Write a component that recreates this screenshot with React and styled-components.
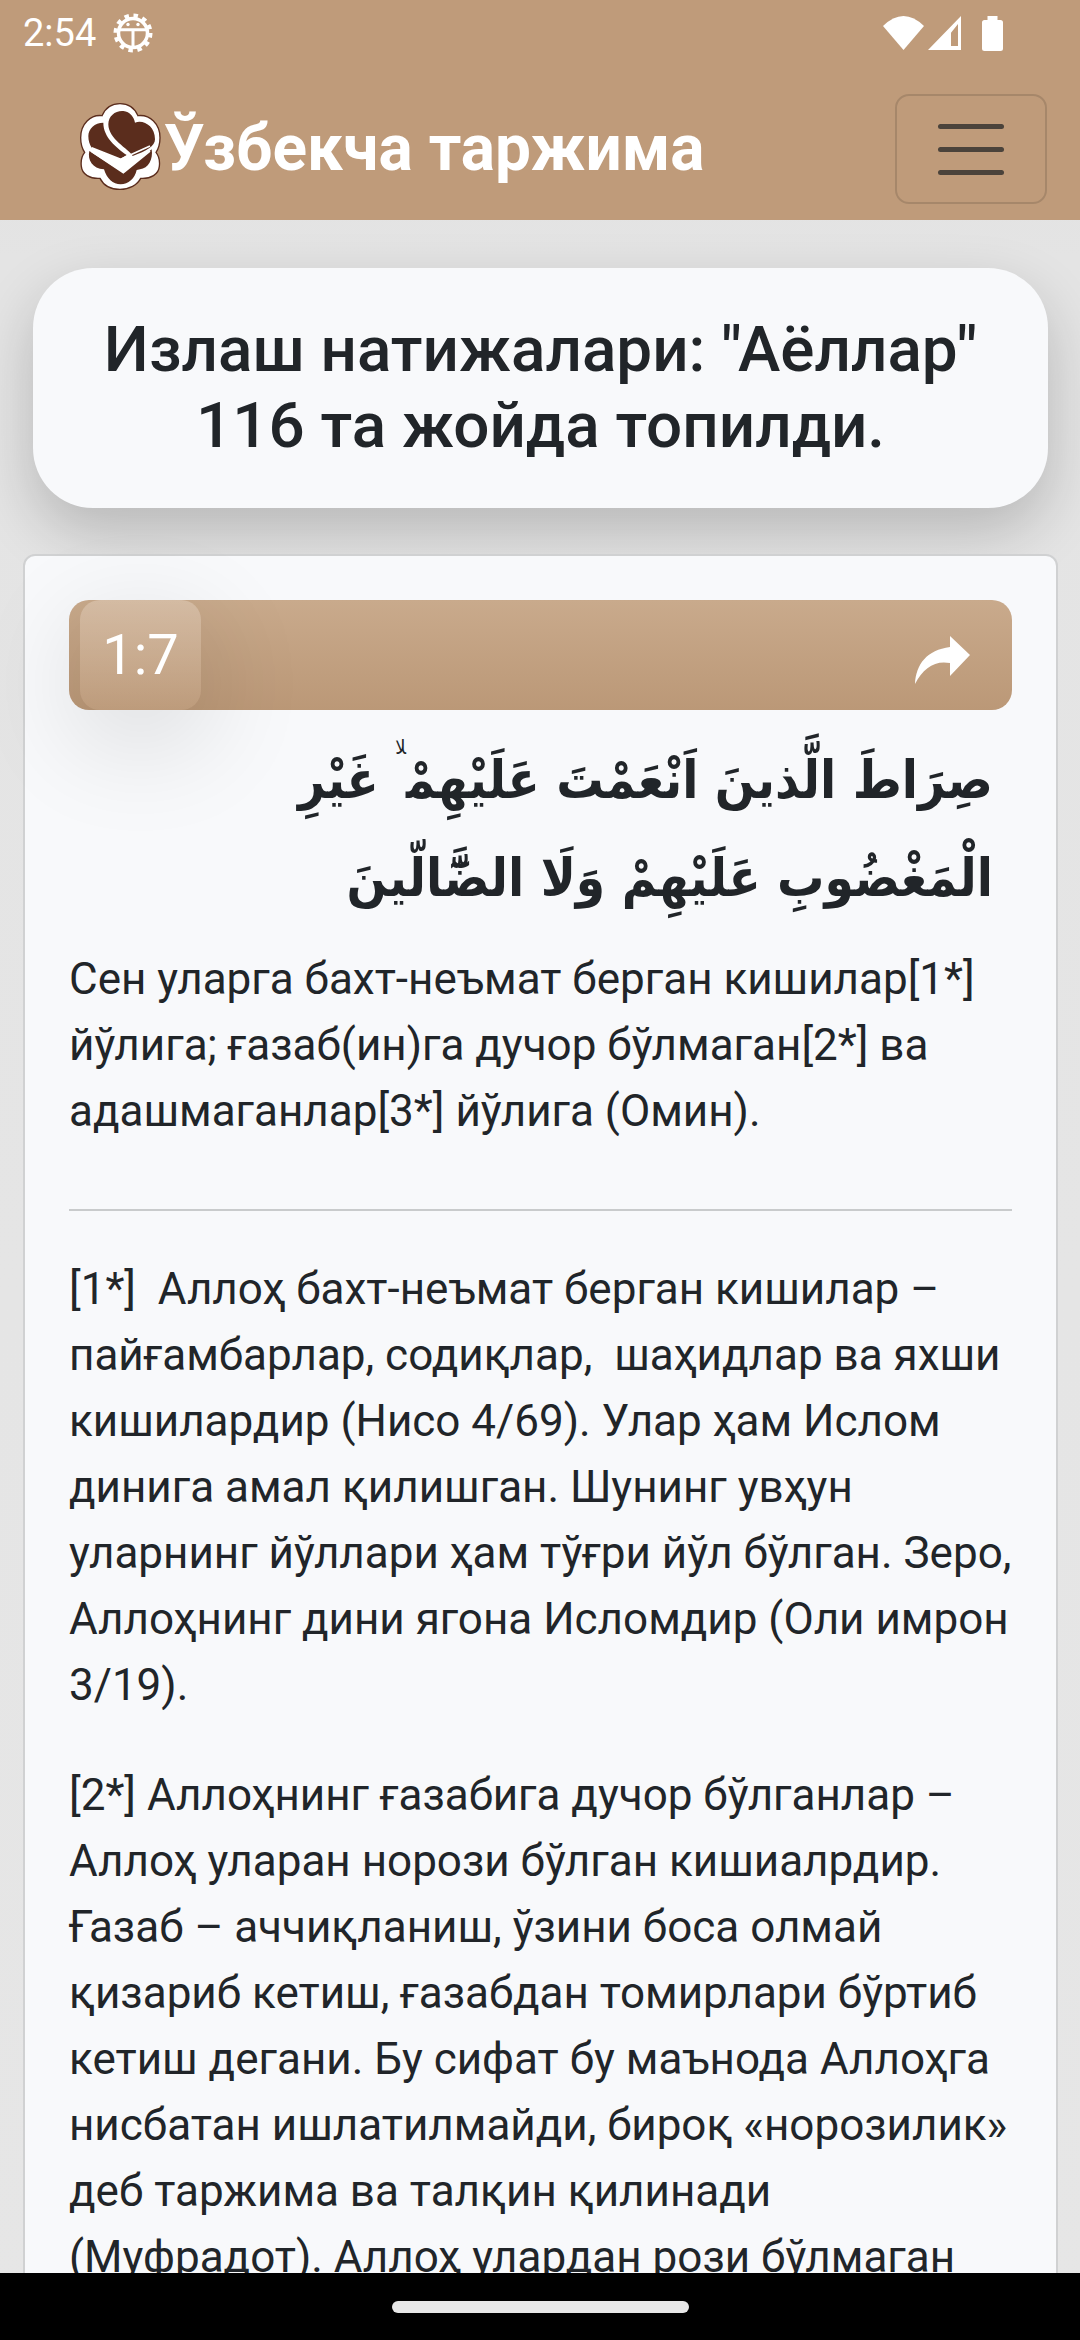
import React from "react";
import styled, { createGlobalStyle } from "styled-components";

const GlobalStyle = createGlobalStyle`
  html, body {
    margin: 0;
    padding: 0;
    height: 2340px;
    overflow: hidden;
    background: #e4e4e4;
    font-family: Roboto, "Noto Sans", sans-serif;
  }
`;

const Page = styled.div`
  height: 2340px;
  overflow: hidden;
  position: relative;
  color: #212529;
  background: linear-gradient(180deg, #e0e0e0 0, #e4e4e4 260px, #e6e6e6 100%);
`;

const Header = styled.header`
  background: #bf9b7a;
  height: 220px;
  display: flex;
  flex-direction: column;
`;

const StatusBar = styled.div`
  height: 66px;
  padding: 0 77px 0 23px;
  display: flex;
  align-items: center;
  justify-content: space-between;
  color: #fff;
`;

const StatusLeft = styled.div`
  display: flex;
  align-items: center;
  gap: 17px;
  font-size: 38px;
  line-height: 1;
`;

const StatusRight = styled.div`
  display: flex;
  align-items: center;
  gap: 4px;
`;

const NavBar = styled.nav`
  flex: 1;
  padding: 12px 33px 0 80px;
  display: flex;
  align-items: center;
  justify-content: space-between;
`;

const Brand = styled.div`
  display: flex;
  align-items: center;
  color: #fff;
  font-size: 64px;
  font-weight: 700;
  line-height: 1;
`;

const Toggler = styled.button`
  width: 152px;
  height: 110px;
  padding: 0;
  border: 2px solid rgba(0, 0, 0, 0.13);
  border-radius: 14px;
  background: transparent;
  display: flex;
  flex-direction: column;
  align-items: center;
  justify-content: center;
  gap: 18px;
`;

const TogglerLine = styled.span`
  width: 66px;
  height: 5px;
  border-radius: 3px;
  background: #4b433b;
`;

const Main = styled.main`
  padding: 48px 22px 0 23px;
`;

const TitleCard = styled.div`
  width: 1015px;
  margin-left: 10px;
  box-sizing: border-box;
  height: 240px;
  border-radius: 60px;
  background: #f8f9fb;
  box-shadow: 0 24px 60px rgba(0, 0, 0, 0.2);
  display: flex;
  align-items: center;
  justify-content: center;
  text-align: center;
  font-size: 63.8px;
  font-weight: 500;
  line-height: 76px;
`;

const ResultCard = styled.section`
  margin-top: 46px;
  box-sizing: border-box;
  width: 1035px;
  height: 1800px;
  padding: 44px 44px 0;
  background: #f8f9fb;
  border: 2px solid #d0d1d2;
  border-radius: 12px;
`;

const VerseBar = styled.div`
  height: 110px;
  border-radius: 20px;
  background: linear-gradient(180deg, #c9aa8c 0, #bb9877 100%);
  padding: 0 42px 0 11px;
  display: flex;
  align-items: center;
  justify-content: space-between;
`;

const VerseChip = styled.div`
  width: 121px;
  height: 110px;
  border-radius: 20px;
  background: linear-gradient(180deg, rgba(255, 255, 255, 0.2), rgba(255, 255, 255, 0.03));
  box-shadow: 0 28px 110px rgba(0, 0, 0, 0.14);
  color: #fff;
  font-size: 56px;
  display: flex;
  align-items: center;
  justify-content: center;
`;

const ShareWrap = styled.div`
  display: flex;
  margin-top: 10px;
`;

const ArabicText = styled.p`
  margin: 21px 0 0;
  padding-right: 19px;
  direction: rtl;
  font-family: "DejaVu Sans", serif;
  font-stretch: condensed;
  font-size: 52.5px;
  font-weight: 700;
  line-height: 98px;
  height: 198px;
`;

const ArabicMark = styled.span`
  font-size: 20px;
  font-weight: 400;
  line-height: 0;
  vertical-align: 44px;
`;

const Paragraph = styled.p`
  margin: ${(props) => props.$gap || 0}px 0 0;
  font-size: 44px;
  line-height: 66px;
  white-space: pre-wrap;
`;

const Divider = styled.hr`
  margin: 65px 0 45px;
  border: 0;
  border-top: 2px solid #c9cbcc;
`;

const BottomNav = styled.div`
  position: absolute;
  left: 0;
  right: 0;
  bottom: 0;
  height: 67px;
  background: #000;
  display: flex;
  justify-content: center;
  padding-top: 28px;
  box-sizing: border-box;
`;

const HomePill = styled.div`
  width: 297px;
  height: 12px;
  border-radius: 6px;
  background: #e8e8e8;
`;

const GearIcon = () => (
  <svg width="40" height="40" viewBox="0 0 40 40" fill="none" stroke="#fff">
    <circle cx="20" cy="20" r="17.500" strokeWidth="4" strokeDasharray="4.500 4.660" />
    <circle cx="20" cy="20" r="14.500" strokeWidth="3.500" />
    <path d="M6 16.700h28M20 16.700V33" strokeWidth="3" />
    <circle cx="15" cy="11.500" r="1.700" fill="#fff" stroke="none" />
    <circle cx="25" cy="11.500" r="1.700" fill="#fff" stroke="none" />
  </svg>
);

const WifiIcon = () => (
  <svg width="41" height="34" viewBox="0 0 41 34">
    <path d="M0 10Q20.500-10 41 10L20.500 34z" fill="#fff" />
  </svg>
);

const SignalIcon = () => (
  <svg width="33" height="34" viewBox="0 0 33 34">
    <path fillRule="evenodd" d="M33 0v34H0zM23 30h7V8l-7 8.700z" fill="#fff" />
  </svg>
);

const BatteryIcon = () => (
  <svg width="21" height="35" viewBox="0 0 21 35" style={{ marginLeft: 17 }}>
    <path d="M5.500 0h10v4h3A2.500 2.500 0 0 1 21 6.500v26a2.500 2.500 0 0 1-2.500 2.500h-16A2.500 2.500 0 0 1 0 32.500v-26A2.500 2.500 0 0 1 2.500 4h3z" fill="#fff" />
  </svg>
);

const LogoIcon = () => (
  <svg width="84" height="90" viewBox="60 60 252 270" style={{ marginTop: -6 }}>
    <path
      d="M180 68c24 0 44 14 54 36 36-4 66 24 66 66 0 18-4 32-12 44 8 10 12 26 10 42-2 24-26 38-56 36-10 20-34 33-62 33s-50-13-60-33c-30 2-54-12-56-36-2-16 2-32 10-42-8-12-12-26-12-44 0-42 30-70 64-66 10-22 30-36 54-36z"
      fill="#fff"
      stroke="#5b2d1d"
      strokeWidth="4"
    />
    <path
      d="M145 130c0-26 22-42 45-40 20 2 32 18 35 35 25-10 60 10 60 50 0 20-25 35-67 50-12-22-73-50-73-95z"
      fill="#5b2d1d"
    />
    <path d="M130 125c-26 0-45 18-45 40 0 15 4 26 10 35l85 35 20-13c-30-22-70-52-70-97z" fill="#5b2d1d" />
    <path d="M88 210l102 65 85-70c5 30-10 58-35 60l-10 2c-5 25-25 43-48 43s-42-18-50-45c-35-2-50-28-44-55z" fill="#5b2d1d" />
    <path d="M95 200l87 35 88-40M95 212l95 63 80-65" fill="none" stroke="#fff" strokeWidth="5" />
  </svg>
);

const ShareIcon = () => (
  <svg width="55" height="48" viewBox="0 0 55 48">
    <path d="M35 0l20 19-20 21V27C20 24 8 32 0 48 1 28 12 14 35 11z" fill="#fff" />
  </svg>
);

export default function App() {
  return (
    <Page>
      <GlobalStyle />
      <Header>
        <StatusBar>
          <StatusLeft>
            2:54
            <GearIcon />
          </StatusLeft>
          <StatusRight>
            <WifiIcon />
            <SignalIcon />
            <BatteryIcon />
          </StatusRight>
        </StatusBar>
        <NavBar>
          <Brand>
            <LogoIcon />
            Ўзбекча таржима
          </Brand>
          <Toggler aria-label="menu">
            <TogglerLine />
            <TogglerLine />
            <TogglerLine />
          </Toggler>
        </NavBar>
      </Header>
      <Main>
        <TitleCard>
          <div>
            Излаш натижалари: "Аёллар"
            <br />
            116 та жойда топилди.
          </div>
        </TitleCard>
        <ResultCard>
          <VerseBar>
            <VerseChip>1:7</VerseChip>
            <ShareWrap>
              <ShareIcon />
            </ShareWrap>
          </VerseBar>
          <ArabicText lang="ar">
            صِرَاطَ الَّذينَ اَنْعَمْتَ عَلَيْهِمْ<ArabicMark>لا</ArabicMark> غَيْرِ
            <br />
            الْمَغْضُوبِ عَلَيْهِمْ وَلَا الضَّٓالّينَ
          </ArabicText>
          <Paragraph $gap={17}>
            Сен уларга бахт-неъмат берган кишилар[1*] йўлига; ғазаб(ин)га дучор бўлмаган[2*] ва адашмаганлар[3*] йўлига (Омин).
          </Paragraph>
          <Divider />
          <Paragraph>
            [1*]  Аллоҳ бахт-неъмат берган кишилар – пайғамбарлар, содиқлар,  шаҳидлар ва яхши кишилардир (Нисо 4/69). Улар ҳам Ислом динига амал қилишган. Шунинг увҳун уларнинг йўллари ҳам тўғри йўл бўлган. Зеро, Аллоҳнинг дини ягона Исломдир (Оли имрон 3/19).
          </Paragraph>
          <Paragraph $gap={44}>
            [2*] Аллоҳнинг ғазабига дучор бўлганлар – Аллоҳ уларан норози бўлган кишиалрдир. Ғазаб – аччиқланиш, ўзини боса олмай қизариб кетиш, ғазабдан томирлари бўртиб кетиш дегани. Бу сифат бу маънода Аллоҳга нисбатан ишлатилмайди, бироқ «норозилик» деб таржима ва талқин қилинади (Муфрадот). Аллоҳ улардан рози бўлмаган
          </Paragraph>
        </ResultCard>
      </Main>
      <BottomNav>
        <HomePill />
      </BottomNav>
    </Page>
  );
}
